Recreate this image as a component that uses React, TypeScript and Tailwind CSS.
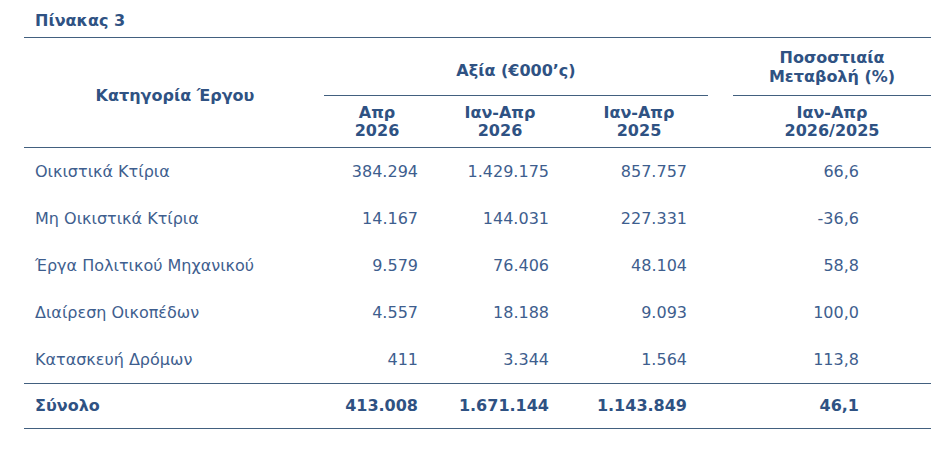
const rows = [
  { label: 'Οικιστικά Κτίρια', a: '384.294', b: '1.429.175', c: '857.757', d: '66,6' },
  { label: 'Μη Οικιστικά Κτίρια', a: '14.167', b: '144.031', c: '227.331', d: '-36,6' },
  { label: 'Έργα Πολιτικού Μηχανικού', a: '9.579', b: '76.406', c: '48.104', d: '58,8' },
  { label: 'Διαίρεση Οικοπέδων', a: '4.557', b: '18.188', c: '9.093', d: '100,0' },
  { label: 'Κατασκευή Δρόμων', a: '411', b: '3.344', c: '1.564', d: '113,8' },
]

const cols = 'grid grid-cols-[300px_106px_140px_138px_25px_198px]'

function DataRow({ r, bold, h }: { r: typeof rows[number]; bold?: boolean; h: string }) {
  const cell = bold ? 'font-bold text-[#2f5283]' : 'text-[#3e5e8e]'
  return (
    <div className={`${cols} ${h} items-center text-[16px] ${cell}`}>
      <div className="pl-[11px]">{r.label}</div>
      <div className="text-right pr-[12px]">{r.a}</div>
      <div className="text-right pr-[21px]">{r.b}</div>
      <div className="text-right pr-[21px]">{r.c}</div>
      <div />
      <div className="text-right pr-[72px]">{r.d}</div>
    </div>
  )
}

export default function App() {
  return (
    <div className="w-[952px] h-[452px] bg-white" style={{ fontFamily: '"DejaVu Sans", Verdana, sans-serif' }}>
      <div className="pl-[35px] pt-[9px] h-[37px] text-[16px] font-bold text-[#2f5283]">Πίνακας 3</div>

      <div className="ml-[24px] w-[907px]">
        {/* header */}
        <div className={`${cols} grid-rows-[58px_51px] border-t border-b border-[#42607f] text-[16px] font-bold text-[#2f5283] leading-[19px]`}>
          <div className="row-span-2 flex items-center justify-center pt-[6px] pl-[2px]">Κατηγορία Έργου</div>
          <div className="col-span-3 flex items-center justify-center pt-[7px] border-b border-[#42607f]">Αξία (€000’ς)</div>
          <div className="row-span-2" />
          <div className="flex flex-col items-center justify-center pt-[1px] border-b border-[#42607f]">
            <span>Ποσοστιαία</span>
            <span>Μεταβολή (%)</span>
          </div>
          <div className="flex flex-col items-center justify-center leading-[18px]">
            <span>Απρ</span>
            <span>2026</span>
          </div>
          <div className="flex flex-col items-center justify-center leading-[18px]">
            <span>Ιαν-Απρ</span>
            <span>2026</span>
          </div>
          <div className="flex flex-col items-center justify-center leading-[18px]">
            <span>Ιαν-Απρ</span>
            <span>2025</span>
          </div>
          <div className="flex flex-col items-center justify-center leading-[18px]">
            <span>Ιαν-Απρ</span>
            <span>2026/2025</span>
          </div>
        </div>

        {/* body */}
        <div className="border-b border-[#42607f]">
          {rows.map(r => (
            <DataRow key={r.label} r={r} h="h-[47px]" />
          ))}
        </div>

        <div className="border-b border-[#42607f]">
          <DataRow r={{ label: 'Σύνολο', a: '413.008', b: '1.671.144', c: '1.143.849', d: '46,1' }} h="h-[44px]" bold />
        </div>
      </div>
    </div>
  )
}
